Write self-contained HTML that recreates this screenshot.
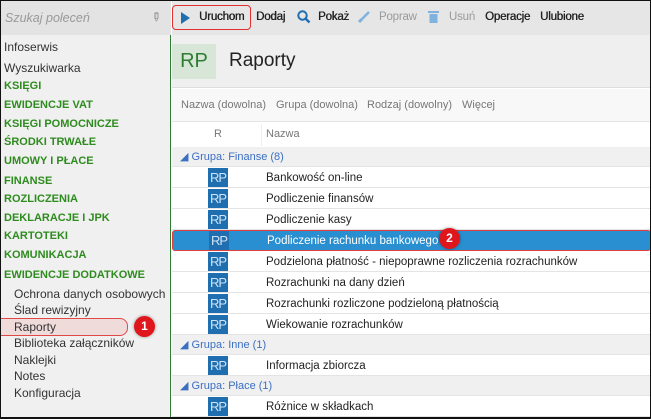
<!DOCTYPE html>
<html><head><meta charset="utf-8"><style>
*{margin:0;padding:0;box-sizing:border-box}
body{width:651px;height:419px;overflow:hidden;font-family:"Liberation Sans","DejaVu Sans",sans-serif;font-size:11.5px;color:#222;background:#fff;position:relative}
.a{position:absolute;white-space:nowrap}
#frame{position:absolute;left:0;top:0;width:651px;height:419px;border:1px solid #111;border-bottom:2px solid #111;z-index:50;pointer-events:none}
.side{left:0;top:0;width:171px;height:419px;background:#f0f0f0;border-right:1px solid #2e7d32}
.sg{color:#2e8b1e;font-weight:bold;font-size:11px}
.si{left:14px;font-size:12px;color:#333}
.row{left:172px;width:479px;height:21px;border-bottom:1px solid #e4e4e4;background:#fff}
.rp{position:absolute;left:36px;top:1px;width:20px;height:19px;background:#1f6eb0;color:#cfe3f5;font-size:13px;line-height:19px;text-align:center;letter-spacing:-1px}
.rt{position:absolute;left:94px;top:5px;font-size:11.5px;color:#222}
.grp{left:172px;width:479px;height:20px;background:#f0f0f0;color:#3b6fc2;font-size:11px;line-height:21px;padding-left:8px;border-bottom:1px solid #e4e4e4}
.badge{width:21px;height:21px;border-radius:50%;background:#e0161d;color:#fff;font-weight:bold;font-size:12px;text-align:center;line-height:21px;box-shadow:0 0 3px rgba(0,0,0,.4)}
.tb{font-size:11.5px;color:#222;top:11px;text-shadow:0.4px 0 0 #222;letter-spacing:-0.2px}
.fl{top:99px;color:#777;font-size:11px}
</style></head><body>
<div class="a side"></div>
<div class="a" style="left:0;top:0;width:171px;height:35px;background:#e3e3e3"></div>
<div class="a" style="left:5px;top:11px;color:#999;font-style:italic;font-size:12.5px">Szukaj poleceń</div>
<div class="a" style="left:151px;top:10px;color:#888;font-size:12px;transform:rotate(45deg)">✎</div>

<div class="a si" style="left:4px;top:40px">Infoserwis</div>
<div class="a si" style="left:4px;top:61px">Wyszukiwarka</div>
<div class="a sg" style="left:4px;top:80px">KSIĘGI</div>
<div class="a sg" style="left:4px;top:99px">EWIDENCJE VAT</div>
<div class="a sg" style="left:4px;top:118px">KSIĘGI POMOCNICZE</div>
<div class="a sg" style="left:4px;top:136px">ŚRODKI TRWAŁE</div>
<div class="a sg" style="left:4px;top:155px">UMOWY I PŁACE</div>
<div class="a sg" style="left:4px;top:175px">FINANSE</div>
<div class="a sg" style="left:4px;top:193px">ROZLICZENIA</div>
<div class="a sg" style="left:4px;top:212px">DEKLARACJE I JPK</div>
<div class="a sg" style="left:4px;top:230px">KARTOTEKI</div>
<div class="a sg" style="left:4px;top:249px">KOMUNIKACJA</div>
<div class="a sg" style="left:4px;top:269px">EWIDENCJE DODATKOWE</div>
<div class="a si" style="top:287px">Ochrona danych osobowych</div>
<div class="a si" style="top:303px">Ślad rewizyjny</div>
<div class="a" style="left:0;top:318px;width:128px;height:18px;border:1.5px solid #e04848;border-left:none;border-radius:0 8px 8px 0;background:rgba(240,180,180,.35)"></div>
<div class="a si" style="top:320px">Raporty</div>
<div class="a badge" style="left:134px;top:316px">1</div>
<div class="a si" style="top:336px">Biblioteka załączników</div>
<div class="a si" style="top:353px">Naklejki</div>
<div class="a si" style="top:369px">Notes</div>
<div class="a si" style="top:386px">Konfiguracja</div>

<div class="a" style="left:172px;top:0;width:479px;height:35px;background:#e6e6e6"></div>
<div class="a" style="left:172px;top:5px;width:79px;height:25px;border:1.5px solid #e03030;border-radius:4px"></div>
<svg class="a" style="left:180px;top:12px" width="10" height="12"><path d="M1 0L10 6L1 12Z" fill="#1f6eb0"/></svg>
<div class="a tb" style="left:199px">Uruchom</div>
<div class="a tb" style="left:256px">Dodaj</div>
<svg class="a" style="left:297px;top:10px" width="14" height="14"><circle cx="5.5" cy="5.5" r="4.2" stroke="#1f6eb0" stroke-width="2" fill="none"/><path d="M8.5 8.5L12.5 12.5" stroke="#1f6eb0" stroke-width="2.4"/></svg>
<div class="a tb" style="left:318px">Pokaż</div>
<svg class="a" style="left:358px;top:11px" width="12" height="12"><path d="M11 1L4 8" stroke="#7fb3de" stroke-width="2.5"/><path d="M1 11L4 8" stroke="#7fb3de" stroke-width="3"/></svg>
<div class="a tb" style="left:379px;color:#999;text-shadow:none">Popraw</div>
<svg class="a" style="left:428px;top:10px" width="11" height="14"><rect x="0" y="1" width="11" height="2" fill="#7fb3de"/><rect x="1.5" y="4" width="8" height="9" fill="#7fb3de"/></svg>
<div class="a tb" style="left:449px;color:#999;text-shadow:none">Usuń</div>
<div class="a tb" style="left:485px">Operacje</div>
<div class="a tb" style="left:540px">Ulubione</div>

<div class="a" style="left:172px;top:35px;width:479px;height:53px;background:#efefef;border-bottom:1px solid #ddd"></div>
<div class="a" style="left:172px;top:44px;width:44px;height:35px;background:#d8e6d8;color:#2e7d32;font-size:20px;line-height:35px;text-align:center">RP</div>
<div class="a" style="left:229px;top:50px;font-size:19px;color:#222">Raporty</div>

<div class="a" style="left:172px;top:89px;width:479px;height:33px;background:#f8f8f8;border-bottom:1px solid #e4e4e4"></div>
<div class="a fl" style="left:181px">Nazwa (dowolna)</div>
<div class="a fl" style="left:276px">Grupa (dowolna)</div>
<div class="a fl" style="left:367px">Rodzaj (dowolny)</div>
<div class="a fl" style="left:462px">Więcej</div>

<div class="a" style="left:172px;top:123px;width:479px;height:24px;background:#fff"></div>
<div class="a" style="left:214px;top:128px;color:#777;font-size:11px">R</div>
<div class="a" style="left:261px;top:124px;height:22px;border-left:1px solid #eee"></div>
<div class="a" style="left:266px;top:128px;color:#777;font-size:11px">Nazwa</div>

<div class="a grp" style="top:147px">◢ Grupa: Finanse (8)</div>
<div class="a row" style="top:167px"><div class="rp">RP</div><div class="rt">Bankowość on-line</div></div>
<div class="a row" style="top:188px"><div class="rp">RP</div><div class="rt">Podliczenie finansów</div></div>
<div class="a row" style="top:209px"><div class="rp">RP</div><div class="rt">Podliczenie kasy</div></div>
<div class="a row" style="top:230px;background:#2a8fd0;border:1.5px solid #e04040;border-radius:3px"><div class="rp" style="top:0">RP</div><div class="rt" style="color:#fff;top:4px">Podliczenie rachunku bankowego</div></div>
<div class="a badge" style="left:439px;top:228px">2</div>
<div class="a row" style="top:251px"><div class="rp">RP</div><div class="rt">Podzielona płatność - niepoprawne rozliczenia rozrachunków</div></div>
<div class="a row" style="top:272px"><div class="rp">RP</div><div class="rt">Rozrachunki na dany dzień</div></div>
<div class="a row" style="top:293px"><div class="rp">RP</div><div class="rt">Rozrachunki rozliczone podzieloną płatnością</div></div>
<div class="a row" style="top:314px"><div class="rp">RP</div><div class="rt">Wiekowanie rozrachunków</div></div>
<div class="a grp" style="top:335px">◢ Grupa: Inne (1)</div>
<div class="a row" style="top:355px"><div class="rp">RP</div><div class="rt">Informacja zbiorcza</div></div>
<div class="a grp" style="top:376px">◢ Grupa: Płace (1)</div>
<div class="a row" style="top:396px"><div class="rp">RP</div><div class="rt">Różnice w składkach</div></div>
<div id="frame"></div>
</body></html>
